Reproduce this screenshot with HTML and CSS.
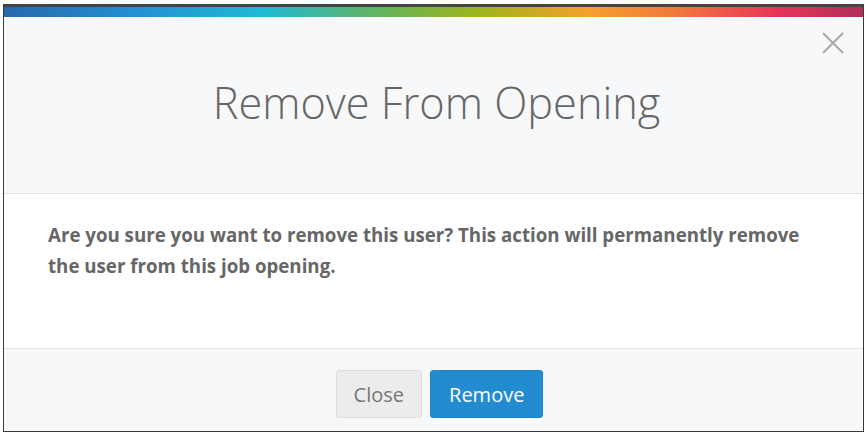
FILE: index.html
```html
<!DOCTYPE html>
<html>
<head>
  <title>Remove From Opening</title>
  <link rel="stylesheet" href="styles.css">
</head>
<body>
<div class="modal">
  <div class="modal-stripe"></div>
  <div class="modal-header">
    <button class="close-x" type="button" aria-label="Close">
      <svg width="22" height="22" viewBox="0 0 22 22">
        <path d="M1 1 L21 21 M21 1 L1 21" stroke="#a9a9a9" stroke-width="2" fill="none"/>
      </svg>
    </button>
    <h1>Remove From Opening</h1>
  </div>

  <div class="modal-body">
    <p>Are you sure you want to remove this user? This action will permanently remove the user from this job opening.</p>
  </div>

  <div class="modal-footer">
    <button class="btn btn-default" type="button">Close</button>
    <button class="btn btn-primary" type="button">Remove</button>
  </div>
</div>
</body>
</html>
```

FILE: styles.css
```css
/* modal styling */
body {
  margin: 0;
  padding: 4px 3px 3px 3px;
  background: #fff;
  font-family: "Open Sans", "Liberation Sans", sans-serif;
}

.modal {
  border: 1px solid #3a3a3a;
  border-top: 3px solid #444;
  height: 428px;
  box-sizing: border-box;
  display: flex;
  flex-direction: column;
  background: #f7f8fa;
}

.modal-stripe {
  height: 10px;
  background: linear-gradient(to right, #2768ad 0%, #2290d2 15%, #1fb9d5 30%, #6ab455 45%, #9cb41e 55%, #f5a02f 68%, #f07a3c 78%, #e7355a 90%, #b02f58 100%);
  border-bottom: 1px solid #fff;
}

.modal-header {
  position: relative;
  height: 175px;
  border-bottom: 1px solid #e3e3e3;
  display: flex;
  align-items: center;
  justify-content: center;
}

.modal-header h1 {
  margin: 0 0 6px 6px;
  font-weight: 300;
  font-size: 43.3px;
  color: #666;
}

.close-x {
  position: absolute;
  top: 14px;
  right: 19px;
  border: none;
  background: none;
  padding: 0;
  cursor: pointer;
}

.modal-body {
  background: #fff;
  height: 154px;
  border-bottom: 1px solid #e3e3e3;
  padding: 0 44px;
}

.modal-body p {
  margin: 25px 0 0 0;
  font-weight: bold;
  font-size: 18.7px;
  line-height: 31px;
  color: #666;
}

.modal-footer {
  flex: 1;
  display: flex;
  justify-content: center;
  align-items: center;
  gap: 8px;
  padding: 8px 0 0 12px;
}

.btn {
  font-family: "Open Sans", "Liberation Sans", sans-serif;
  font-size: 20px;
  height: 48px;
  border-radius: 3px;
  padding: 0 17px;
  cursor: pointer;
}

.btn-default {
  background: #ececec;
  border: 1px solid #ddd;
  color: #777;
}

.btn-primary {
  background: #238bd0;
  border: 1px solid #1f84c6;
  color: #fff;
  padding: 0 18px;
}
```
